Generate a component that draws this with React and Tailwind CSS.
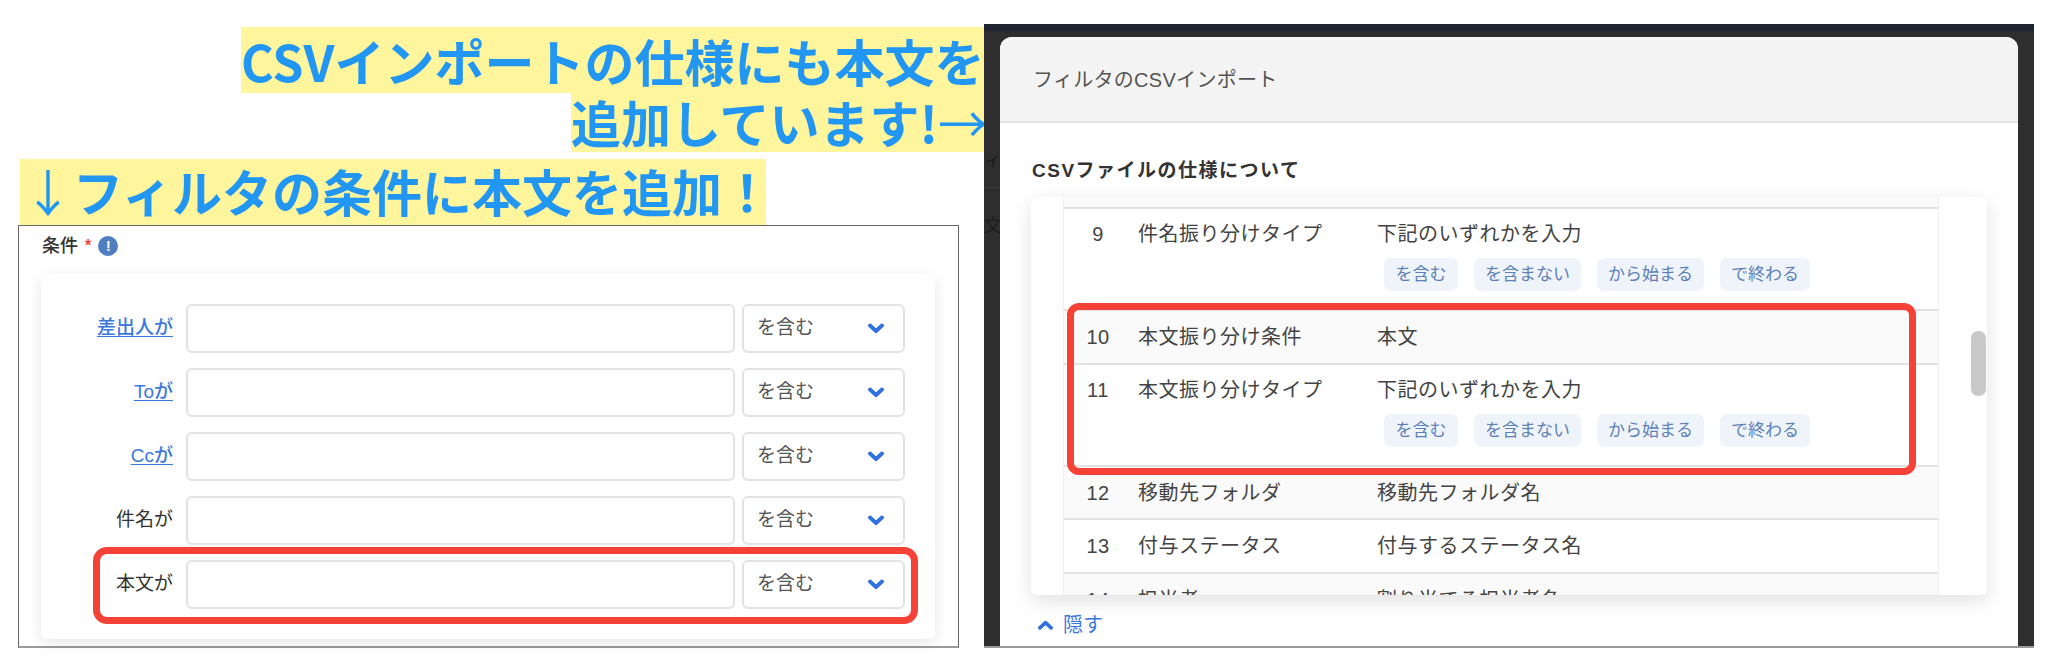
import React from "react";

const CHIPS = [
  { label: "を含む", w: "w-[74px]" },
  { label: "を含まない", w: "w-[107px]" },
  { label: "から始まる", w: "w-[107px]" },
  { label: "で終わる", w: "w-[90px]" },
];

const CONDITIONS = [
  { label: "差出人が", link: true },
  { label: "Toが", link: true },
  { label: "Ccが", link: true },
  { label: "件名が", link: false },
  { label: "本文が", link: false, marked: true },
];

function Chevron({ up = false, className = "" }) {
  return (
    <svg viewBox="0 0 16 10" className={className} fill="none" stroke="#2f6fe0" strokeWidth="3.8" strokeLinecap="round" strokeLinejoin="round">
      <path d={up ? "M2 8 L8 2.5 L14 8" : "M2 2 L8 7.5 L14 2"} />
    </svg>
  );
}

function ConditionRow({ label, link, marked }) {
  return (
    <div className="relative flex items-center h-[49px]">
      <div className="w-[132px] mr-[13px] text-right text-[19px]">
        {link ? <span className="text-[#3b78dd] underline underline-offset-2 font-medium">{label}</span> : <span className="text-[#333]">{label}</span>}
      </div>
      <div className="w-[549px] h-full rounded-[6px] border-2 border-[#e2e2e2] bg-white" />
      <div className="ml-[7px] w-[163px] h-full rounded-[6px] border-2 border-[#e2e2e2] bg-white flex items-center justify-between pl-[13px] pr-[19px]">
        <span className="text-[19px] text-[#555]">を含む</span>
        <Chevron className="w-[16px] h-[11px]" />
      </div>
      {marked && <div className="absolute left-[52px] top-[-13px] w-[825px] h-[77px] rounded-[14px] border-[7px] border-[#f44336]" />}
    </div>
  );
}

function SpecRow({ no, name, value, chips, tint, height }) {
  return (
    <div className={`flex border-b-2 border-[#e2e2e2] ${height} ${tint ? "bg-[#fafafa]" : "bg-white"}`}>
      <div className="w-full">
        <div className={`flex items-center text-[20px] tracking-[0.5px] text-[#444] ${chips ? "h-[50px]" : "h-full"}`}>
          <div className="w-[68px] text-center shrink-0">{no}</div>
          <div className="ml-[6px] w-[239px] shrink-0">{name}</div>
          <div>{value}</div>
        </div>
        {chips && (
          <div className="flex gap-[16px] ml-[320px] mt-[-1px]">
            {CHIPS.map((c) => (
              <div key={c.label} className={`${c.w} h-[33px] rounded-[7px] bg-[#eff4fb] text-[#5c80b8] text-[17px] flex items-center justify-center`}>
                {c.label}
              </div>
            ))}
          </div>
        )}
      </div>
    </div>
  );
}

export default function App() {
  return (
    <div className="w-[2048px] h-[664px] overflow-hidden bg-white flex font-['Liberation_Sans','Noto_Sans_CJK_JP',sans-serif]">
      {/* 左カラム */}
      <div className="w-[984px] shrink-0 pt-[27px]">
        <div className="flex flex-col items-end font-['Noto_Sans_CJK_JP',sans-serif] font-bold text-[#2196f3]">
          <div className="h-[66px] w-[743px] bg-[#fff59d] text-[50px] leading-[66px] text-right whitespace-nowrap pr-[4px]">CSVインポートの仕様にも本文を</div>
          <div className="h-[59px] w-[413px] bg-[#fff59d] text-[50px] leading-[57px] text-right whitespace-nowrap">
            追加しています!<span className="font-normal">→</span>
          </div>
        </div>
        <div className="mt-[7px] ml-[20px] w-[746px] h-[66px] bg-[#fff59d] pl-[3px] text-[50px] leading-[62px] font-bold text-[#2196f3] whitespace-nowrap font-['Noto_Sans_CJK_JP',sans-serif]">
          <span className="font-normal">↓</span>フィルタの条件に本文を追加！
        </div>

        <div className="ml-[18px] w-[941px] h-[423px] border border-[#666] border-b-2 border-b-[#999] pl-[22px]">
          <div className="h-[48px] flex items-center pb-[8px] gap-[7px]">
            <span className="ml-[1px] text-[18px] font-medium text-[#333]">条件</span>
            <span className="text-[16px] text-[#f44336] font-bold">*</span>
            <span className="w-[20px] h-[20px] rounded-full bg-[#4f7fc0] text-white text-[14px] font-bold flex items-center justify-center">!</span>
          </div>
          <div className="w-[894px] h-[365px] rounded-[6px] bg-white shadow-[0_4px_14px_rgba(0,0,0,0.1)] pt-[30px] flex flex-col gap-[15px]">
            {CONDITIONS.map((c) => (
              <ConditionRow key={c.label} {...c} />
            ))}
          </div>
        </div>
      </div>

      {/* 右カラム */}
      <div className="relative mt-[24px] w-[1050px] h-[624px] shrink-0 bg-[#2e2e2e] border-t-[7px] border-t-[#1d2530] border-b-2 border-b-[#999] px-[16px] pt-[6px]">
        <span className="absolute left-0 top-[116px] text-[18px] text-[#1c1c1c]">ィ</span>
        <span className="absolute left-0 top-[156px] w-[16px] h-px bg-[#3a3a3a]" />
        <span className="absolute left-0 top-[182px] text-[18px] text-[#1c1c1c]">文</span>

        <div className="relative w-[1018px] h-[609px] rounded-t-[12px] bg-white overflow-hidden">
          <div className="h-[86px] bg-[#f4f4f4] border-b-2 border-[#e2e2e2] flex items-center pl-[33px] pt-[2px] text-[20px] tracking-[0.3px] text-[#555]">
            フィルタのCSVインポート
          </div>
          <div className="h-[74px] flex items-center pl-[32px] pt-[22px] text-[19px] tracking-[1.5px] font-bold text-[#333]">
            CSVファイルの仕様について
          </div>
          <div className="relative ml-[31px] w-[956px] h-[398px] rounded-[6px] bg-white shadow-[0_6px_20px_rgba(0,0,0,0.12)] overflow-hidden">
            <div className="ml-[32px] w-[876px] border-x border-[#f0f0f0]">
              <div className="h-[12px] bg-[#fafafa] border-b-2 border-[#e2e2e2]" />
              <SpecRow no="9" name="件名振り分けタイプ" value="下記のいずれかを入力" chips height="h-[102px]" />
              <SpecRow no="10" name="本文振り分け条件" value="本文" tint height="h-[54px]" />
              <SpecRow no="11" name="本文振り分けタイプ" value="下記のいずれかを入力" chips height="h-[102px]" />
              <SpecRow no="12" name="移動先フォルダ" value="移動先フォルダ名" tint height="h-[53px]" />
              <SpecRow no="13" name="付与ステータス" value="付与するステータス名" height="h-[54px]" />
              <SpecRow no="14" name="担当者" value="割り当てる担当者名" tint height="h-[54px]" />
            </div>
            <div className="absolute left-[940px] top-[134px] w-[15px] h-[65px] rounded-[7px] bg-[#c9c9c9]" />
            <div className="absolute left-[36px] top-[106px] w-[849px] h-[172px] rounded-[12px] border-[7px] border-[#f44336]" />
          </div>
          <div className="mt-[15px] ml-[38px] flex items-center gap-[10px] text-[20px] text-[#3b78dd]">
            <Chevron up className="w-[15px] h-[10px]" />
            <span>隠す</span>
          </div>
        </div>
      </div>
    </div>
  );
}
